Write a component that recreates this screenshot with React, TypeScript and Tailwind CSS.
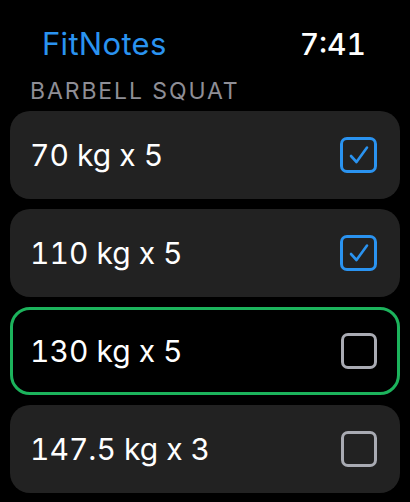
import React from 'react';

type SetRow = { label: string; done: boolean; active?: boolean };

const sets: SetRow[] = [
  { label: '70 kg x 5', done: true },
  { label: '110 kg x 5', done: true },
  { label: '130 kg x 5', done: false, active: true },
  { label: '147.5 kg x 3', done: false },
];

const CheckBox: React.FC<{ checked: boolean }> = ({ checked }) =>
  checked ? (
    <div className="flex h-[36px] w-[37px] items-center justify-center rounded-[7px] border-[3px] border-[#2a93f0]">
      <svg width="22" height="20" viewBox="0 0 22 20" fill="none">
        <path d="M3 11 L8.5 17 L19 2.5" stroke="#2a93f0" strokeWidth="2.6" strokeLinecap="round" strokeLinejoin="round" />
      </svg>
    </div>
  ) : (
    <div className="h-[36px] w-[36px] rounded-[7px] border-[3px] border-[#a9abb3]" />
  );

const App: React.FC = () => {
  return (
    <div className="h-[502px] w-[410px] overflow-hidden bg-black font-['Inter',sans-serif] text-white">
      <div className="flex items-center justify-between pl-[42px] pr-[44px] pt-[24px]">
        <span className="text-[31px] leading-[40px] tracking-[0.3px] text-[#2a93f0]">FitNotes</span>
        <span className="text-[30px] leading-[40px] font-medium tabular-nums">7:41</span>
      </div>
      <div className="mt-[14px] pl-[30px] text-[23px] leading-[26px] tracking-[1.9px] text-[#8e8e96]">
        BARBELL SQUAT
      </div>
      <div className="mt-[7px] flex flex-col gap-[10px] px-[10px]">
        {sets.map((s) => (
          <div
            key={s.label}
            className={
              s.active
                ? 'flex h-[88px] items-center justify-between rounded-[20px] border-[3px] border-[#1cb35c] bg-black pl-[17px] pr-[20px]'
                : 'flex h-[88px] items-center justify-between rounded-[20px] bg-[#222222] pl-[20px] pr-[23px]'
            }
          >
            <span className="text-[30px] leading-[36px] tabular-nums">{s.label}</span>
            <CheckBox checked={s.done} />
          </div>
        ))}
      </div>
    </div>
  );
};

export default App;
